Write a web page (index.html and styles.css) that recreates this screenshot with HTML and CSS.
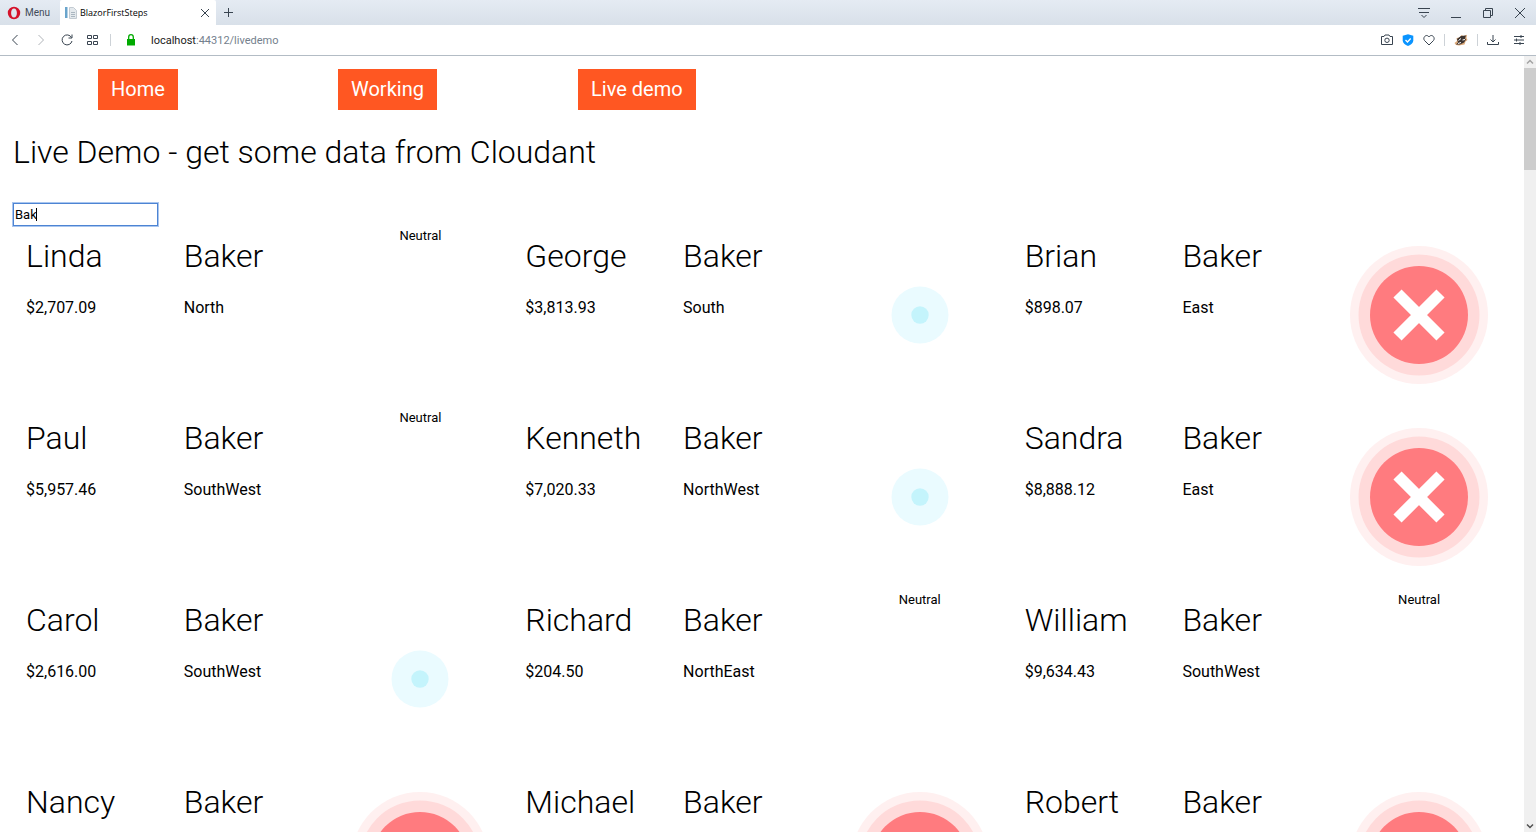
FILE: index.html
```html
<!DOCTYPE html>
<html lang="en">
<head>
    <meta charset="UTF-8">
    <meta name="viewport" content="width=device-width, initial-scale=1.0">
    <title>BlazorFirstSteps</title>
    <link rel="stylesheet" href="styles.css">
</head>
<body>
    <svg class="defs" aria-hidden="true">
        <symbol id="negative" viewBox="0 0 138 138">
            <circle cx="69" cy="69" r="69" fill="#fff0f0"/>
            <circle cx="69" cy="69" r="60.5" fill="#ffdada"/>
            <circle cx="69" cy="69" r="49" fill="#ff7b7f"/>
            <path d="M47.5 47.5l43 43M90.5 47.5l-43 43" stroke="#fff" stroke-width="11.5"/>
        </symbol>
        <symbol id="positive" viewBox="0 0 138 138">
            <circle cx="69" cy="69" r="28.5" fill="#eafbff"/>
            <circle cx="69" cy="69" r="8.7" fill="#c4f4fc"/>
        </symbol>
    </svg>

    <header class="browser">
        <div class="tabs">
            <button class="menu">
                <svg width="14" height="14" viewBox="0 0 14 14"><path fill="#d5122a" fill-rule="evenodd" d="M7 .8a6.200 6.200 0 1 0 0 12.400A6.200 6.200 0 0 0 7 .8zM7 2.500c1.800 0 2.900 2 2.900 4.500S8.800 11.500 7 11.500 4.100 9.500 4.100 7 5.200 2.500 7 2.500z"/></svg>
                Menu
            </button>
            <div class="tab">
                <svg width="14" height="14" viewBox="0 0 14 14"><path fill="#6aa5cc" d="M1 1h2.500v11H1z"/><path fill="#e4e9ed" stroke="#c3cbd2" d="M5.500 1.500h4l3 3v8h-7z"/><path stroke="#aab6c0" d="M7 6.500h4M7 8.500h4M7 10.500h4"/></svg>
                <span class="tab-title">BlazorFirstSteps</span>
                <button aria-label="Close tab"><svg width="10" height="10" viewBox="0 0 10 10"><path d="M1 1l8 8M9 1l-8 8"/></svg></button>
            </div>
            <button class="new-tab" aria-label="New tab"><svg width="10" height="10" viewBox="0 0 10 10"><path d="M4.500 0v9M0 4.500h9"/></svg></button>
            <div class="window-buttons">
                <button aria-label="Tab menu"><svg width="12" height="12" viewBox="0 0 12 12"><path d="M0 1.500h12M1 5.500h10M3.500 8l2.500 2.500L8.500 8"/></svg></button>
                <button aria-label="Minimize"><svg width="12" height="12" viewBox="0 0 12 12"><path d="M1 10.500h10"/></svg></button>
                <button aria-label="Restore"><svg width="12" height="12" viewBox="0 0 12 12"><path d="M1.500 3.500h7v7h-7zM3.500 3.500v-2h7v7h-2"/></svg></button>
                <button aria-label="Close"><svg width="12" height="12" viewBox="0 0 12 12"><path d="M1 1l10 10M11 1L1 11"/></svg></button>
            </div>
        </div>
        <div class="toolbar">
            <div class="tools">
                <button aria-label="Back"><svg width="12" height="12" viewBox="0 0 12 12"><path d="M8.500 1l-5 5 5 5"/></svg></button>
                <button class="disabled" aria-label="Forward"><svg width="12" height="12" viewBox="0 0 12 12"><path d="M3.500 1l5 5-5 5"/></svg></button>
                <button aria-label="Reload"><svg width="12" height="12" viewBox="0 0 12 12"><path d="M10.500 3.500A5 5 0 1 0 11 7M11 .5v3.500H7.500"/></svg></button>
                <button aria-label="Speed dial"><svg width="12" height="12" viewBox="0 0 12 12"><path d="M.5 1.500h4v3h-4zM6.500 1.500h4v3h-4zM.5 7.500h4v3h-4zM6.500 7.500h4v3h-4z"/></svg></button>
            </div>
            <span class="divider"></span>
            <svg class="lock" width="10" height="12" viewBox="0 0 10 12"><path fill="#0a0" stroke="none" d="M1 5h8v6.500H1z"/><path stroke="#0a0" stroke-width="1.300" d="M2.700 5V3a2.300 2.300 0 0 1 4.600 0v2"/></svg>
            <div class="url">localhost<span>:44312/livedemo</span></div>
            <div class="actions">
                <button aria-label="Snapshot"><svg width="12" height="12" viewBox="0 0 12 12"><path d="M.5 2.500H3l1-1.500h4l1 1.500h2.500v8H.5z"/><circle cx="6" cy="6.300" r="2.200"/></svg></button>
                <button aria-label="Security"><svg width="12" height="12" viewBox="0 0 12 12"><path fill="#0a94ff" stroke="none" d="M6 .3l5.300 1.500v4.700c0 2.500-2.300 4.300-5.300 5.500C3 10.800.7 9 .7 6.500V1.800z"/><path stroke="#fff" stroke-width="1.300" d="M3.500 6l2 2 3.200-3.500"/></svg></button>
                <button aria-label="Bookmark"><svg width="12" height="12" viewBox="0 0 12 12"><path d="M6 11L1.500 6.500C-.8 3.500 3.500-.8 6 3c2.500-3.800 6.800.5 4.500 3.500z"/></svg></button>
                <span class="divider"></span>
                <button class="extension" aria-label="Extension"><svg width="14" height="12" viewBox="0 0 14 12"><path fill="#dca878" stroke="none" d="M.5 9l2.500-2-.5-3 3-.5L7.500 1l2 1L13 .8l-.5 3.200 1 2-2 1.500-1 3-3 .5-2.500.5-3-.5z"/><path fill="#3c3431" stroke="none" d="M3 5l4-3 5-.5-1 3 1 1-2 3-4 2-4 0 2-2z"/><path stroke="#fff" d="M4.500 6.500l2.500-2M4 9.500l3-1M8.500 6l2.500-.5"/></svg></button>
                <span class="divider"></span>
                <button aria-label="Downloads"><svg width="12" height="12" viewBox="0 0 12 12"><path d="M6 1v7M3.500 5.500L6 8l2.500-2.500M.5 8v2.500h11V8"/></svg></button>
                <button class="setup" aria-label="Easy setup"><svg width="12" height="12" viewBox="0 0 12 12"><path d="M1 2.500h10M1 6h10M1 9.500h10M8 1v3M3.500 4.500v3M7 8v3"/></svg></button>
            </div>
        </div>
    </header>

    <div class="viewport">
        <main class="page">
            <nav>
                <div><a href="#">Home</a></div>
                <div><a href="#">Working</a></div>
                <div><a href="#">Live demo</a></div>
            </nav>
            <h1>Live Demo - get some data from Cloudant</h1>
            <div class="search">
                <input type="text" value="Bak" aria-label="Filter by name">
                <span class="caret"></span>
            </div>

            <div class="customers">
                <article class="customer">
                    <div><h2>Linda</h2><p>$2,707.09</p></div>
                    <div><h2>Baker</h2><p>North</p></div>
                    <div class="mood">Neutral</div>
                </article>
                <article class="customer">
                    <div><h2>George</h2><p>$3,813.93</p></div>
                    <div><h2>Baker</h2><p>South</p></div>
                    <div class="mood"><svg><use href="#positive"/></svg></div>
                </article>
                <article class="customer">
                    <div><h2>Brian</h2><p>$898.07</p></div>
                    <div><h2>Baker</h2><p>East</p></div>
                    <div class="mood"><svg><use href="#negative"/></svg></div>
                </article>
                <article class="customer">
                    <div><h2>Paul</h2><p>$5,957.46</p></div>
                    <div><h2>Baker</h2><p>SouthWest</p></div>
                    <div class="mood">Neutral</div>
                </article>
                <article class="customer">
                    <div><h2>Kenneth</h2><p>$7,020.33</p></div>
                    <div><h2>Baker</h2><p>NorthWest</p></div>
                    <div class="mood"><svg><use href="#positive"/></svg></div>
                </article>
                <article class="customer">
                    <div><h2>Sandra</h2><p>$8,888.12</p></div>
                    <div><h2>Baker</h2><p>East</p></div>
                    <div class="mood"><svg><use href="#negative"/></svg></div>
                </article>
                <article class="customer">
                    <div><h2>Carol</h2><p>$2,616.00</p></div>
                    <div><h2>Baker</h2><p>SouthWest</p></div>
                    <div class="mood"><svg><use href="#positive"/></svg></div>
                </article>
                <article class="customer">
                    <div><h2>Richard</h2><p>$204.50</p></div>
                    <div><h2>Baker</h2><p>NorthEast</p></div>
                    <div class="mood">Neutral</div>
                </article>
                <article class="customer">
                    <div><h2>William</h2><p>$9,634.43</p></div>
                    <div><h2>Baker</h2><p>SouthWest</p></div>
                    <div class="mood">Neutral</div>
                </article>
                <article class="customer">
                    <div><h2>Nancy</h2></div>
                    <div><h2>Baker</h2></div>
                    <div class="mood"><svg><use href="#negative"/></svg></div>
                </article>
                <article class="customer">
                    <div><h2>Michael</h2></div>
                    <div><h2>Baker</h2></div>
                    <div class="mood"><svg><use href="#negative"/></svg></div>
                </article>
                <article class="customer">
                    <div><h2>Robert</h2></div>
                    <div><h2>Baker</h2></div>
                    <div class="mood"><svg><use href="#negative"/></svg></div>
                </article>
            </div>
        </main>
        <div class="scrollbar">
            <svg width="12" height="12" viewBox="0 0 12 12"><path stroke="#a3a3a3" stroke-width="1.500" d="M3 7.500l3-3 3 3"/></svg>
            <div class="thumb"></div>
            <svg width="12" height="12" viewBox="0 0 12 12"><path stroke="#505050" stroke-width="1.500" d="M3 4.500l3 3 3-3"/></svg>
        </div>
    </div>
</body>
</html>
```

FILE: styles.css
```css
* {
    box-sizing: border-box;
}

body {
    margin: 0;
    height: 100vh;
    display: flex;
    flex-direction: column;
    overflow: hidden;
    font-family: Roboto, sans-serif;
    color: #000;
    background-color: #fff;
}

.defs {
    position: absolute;
    width: 0;
    height: 0;
}

/* Browser window */
.browser {
    flex: none;
    font-family: "Open Sans", sans-serif;
    font-size: 11px;
    border-bottom: 1px solid #b3bcc5;
}

.browser svg {
    display: block;
    fill: none;
    stroke: #394450;
}

.browser button {
    padding: 0;
    border: none;
    background: none;
    color: inherit;
    font: inherit;
}

.tabs {
    display: flex;
    height: 25px;
    background: linear-gradient(#e5ebf3, #d8e0e9);
}

.browser .menu {
    display: flex;
    align-items: center;
    gap: 4px;
    width: 60px;
    padding-left: 7px;
    font-family: Roboto, sans-serif;
    font-size: 10px;
    color: #3f4b58;
}

.browser .menu svg,
.browser .tab > svg {
    stroke: none;
}

.tab {
    display: flex;
    align-items: center;
    width: 156px;
    padding: 0 6px 0 4px;
    background-color: #fff;
    border-radius: 2px 2px 0 0;
}

.tab-title {
    flex: 1;
    padding-left: 2px;
    font-size: 9px;
}

.browser .new-tab {
    padding: 0 8px;
}

.window-buttons {
    display: flex;
    gap: 20px;
    margin-left: auto;
    padding-right: 10px;
}

.toolbar {
    display: flex;
    align-items: center;
    height: 30px;
    padding: 0 11px 0 9px;
}

.tools {
    display: flex;
    gap: 14px;
}

.disabled {
    opacity: 0.4;
}

.divider {
    width: 1px;
    height: 12px;
    background-color: #cdd2d7;
}

.tools + .divider {
    margin-left: 11px;
}

.lock {
    margin: 0 15px;
}

.url {
    font-family: Roboto, sans-serif;
    color: #202020;
}

.url span {
    color: #74808d;
}

.actions {
    display: flex;
    align-items: center;
    gap: 9px;
    margin-left: auto;
}

.browser .setup {
    margin-left: 5px;
}

/* Page */
.viewport {
    display: flex;
    flex: 1;
    min-height: 0;
}

.page {
    flex: 1;
    min-width: 0;
    padding: 13px 13px 0;
    overflow: hidden;
}

nav {
    display: flex;
    padding-left: 85px;
}

nav div {
    width: 240px;
}

nav a {
    display: inline-block;
    padding: 0 13px;
    font-size: 20px;
    line-height: 41px;
    color: #fff;
    background-color: #ff5722;
    text-decoration: none;
}

h1,
h2 {
    font-size: 32px;
    font-weight: 300;
    line-height: 40px;
}

h1 {
    margin: 22px 0 31px;
}

.search {
    position: relative;
    width: 145px;
    height: 23px;
}

.search input {
    display: block;
    width: 100%;
    height: 23px;
    padding: 0 1px;
    border: 1px solid #4d84d3;
    outline: 1px solid #a9c6ef;
    font-family: inherit;
    font-size: 13px;
}

.caret {
    position: absolute;
    left: 23px;
    top: 5px;
    width: 1px;
    height: 13px;
    background-color: #000;
}

.customers {
    display: grid;
    grid-template-columns: repeat(3, 1fr);
}

.customer {
    display: grid;
    grid-template-columns: repeat(3, 1fr);
    height: 182px;
    padding: 0 13px;
}

h2 {
    margin: 10px 0 22px;
}

.customer p {
    margin: 0;
    font-size: 16px;
    line-height: 20px;
}

.mood {
    font-size: 13px;
    line-height: 20px;
    text-align: center;
}

.mood svg {
    width: 138px;
    height: 138px;
    margin-top: 20px;
}

.scrollbar {
    display: flex;
    flex-direction: column;
    width: 12px;
    background-color: #f0f0f0;
}

.scrollbar svg {
    fill: none;
}

.thumb {
    height: 102px;
    margin-bottom: auto;
    background-color: #cdcdcd;
}
```
